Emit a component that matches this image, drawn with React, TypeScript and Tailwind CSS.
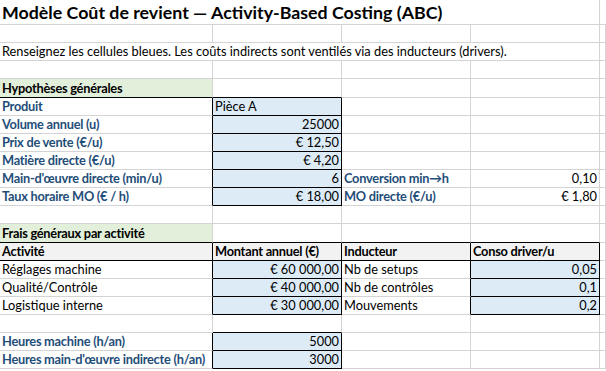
import React from 'react';

type Cell = {
  text?: string;
  span?: number;
  right?: boolean;
  bold?: boolean;
  label?: boolean;
  bg?: string;
  bR?: boolean;
  bB?: boolean;
};

const spanCls: Record<number, string> = { 1: 'col-span-1', 4: 'col-span-4' };

const XCell = ({ c }: { c: Cell }) => (
  <div
    className={[
      'flex items-end overflow-visible whitespace-nowrap px-[2px] pb-[1px] leading-[15px] border-r border-b',
      c.bR ? 'border-r-black' : 'border-r-[#d4d4d4]',
      c.bB ? 'border-b-black' : 'border-b-[#d4d4d4]',
      c.right ? 'justify-end' : 'justify-start',
      c.bold || c.label ? 'font-bold tracking-[-0.25px]' : 'font-normal',
      c.label ? 'text-[#1f4e79]' : 'text-black',
      c.bg ?? 'bg-white',
      spanCls[c.span ?? 1],
    ].join(' ')}
  >
    {c.text}
  </div>
);

const Row = ({ cells, h = 'h-[18px]' }: { cells: Cell[]; h?: string }) => (
  <div className={`grid grid-cols-[213px_129px_129px_129px_1fr] ${h}`}>
    {cells.map((c, i) => (
      <XCell key={i} c={c} />
    ))}
  </div>
);

const blue = 'bg-[#ddebf7]';
const green = 'bg-[#e2efda]';
const gray = 'bg-[#f2f2f2]';

const empty = (): Cell[] => [{}, {}, {}, {}, {}];

// hypothèses : libellé, valeur, libellé calculé, résultat
const hypo: [string, string, boolean, string?, string?][] = [
  ['Produit', 'Pièce A', false],
  ['Volume annuel (u)', '25000', true],
  ['Prix de vente (€/u)', '€ 12,50', true],
  ['Matière directe (€/u)', '€ 4,20', true],
  ["Main-d'œuvre directe (min/u)", '6', true, 'Conversion min→h', '0,10'],
  ['Taux horaire MO (€ / h)', '€ 18,00', true, 'MO directe (€/u)', '€ 1,80'],
];

const activites = [
  ['Réglages machine', '€ 60 000,00', 'Nb de setups', '0,05'],
  ['Qualité/Contrôle', '€ 40 000,00', 'Nb de contrôles', '0,1'],
  ['Logistique interne', '€ 30 000,00', 'Mouvements', '0,2'],
];

const heures = [
  ['Heures machine (h/an)', '5000'],
  ["Heures main-d'œuvre indirecte (h/an)", '3000'],
];

export default function App() {
  return (
    <div className="w-[606px] h-[371px] overflow-hidden bg-white text-[12.8px] font-['Lato',sans-serif]">
      <div className="grid grid-cols-[213px_129px_129px_129px_1fr] h-[25px]">
        <div className="col-span-4 flex items-end whitespace-nowrap px-[2px] pb-[1px] text-[17.8px] leading-[22px] font-bold text-black border-r border-b border-r-[#d4d4d4] border-b-[#d4d4d4]">
          Modèle Coût de revient — Activity-Based Costing (ABC)
        </div>
        <div className="border-b border-b-[#d4d4d4]" />
      </div>
      <Row cells={empty()} />
      <Row
        cells={[
          { text: 'Renseignez les cellules bleues. Les coûts indirects sont ventilés via des inducteurs (drivers).', span: 4 },
          {},
        ]}
      />
      <Row cells={empty()} />
      <Row
        h="h-[19px]"
        cells={[{ text: 'Hypothèses générales', bold: true, bg: green, bB: true }, { bB: true }, {}, {}, {}]}
      />
      {hypo.map(([lab, val, right, lab2, val2]) => (
        <Row
          key={lab}
          cells={[
            { text: lab, label: true, bR: true },
            { text: val, right, bg: blue, bR: true, bB: true },
            { text: lab2, label: true },
            { text: val2, right: true },
            {},
          ]}
        />
      ))}
      <Row cells={empty()} />
      <Row
        h="h-[19px]"
        cells={[
          { text: 'Frais généraux par activité', bold: true, bg: green, bB: true },
          { bB: true },
          { bB: true },
          { bB: true },
          {},
        ]}
      />
      <Row
        cells={[
          { text: 'Activité', bold: true, bg: gray, bR: true, bB: true },
          { text: 'Montant annuel (€)', bold: true, bg: gray, bR: true, bB: true },
          { text: 'Inducteur', bold: true, bg: gray, bR: true, bB: true },
          { text: 'Conso driver/u', bold: true, bg: gray, bR: true, bB: true },
          {},
        ]}
      />
      {activites.map(([act, mt, ind, conso]) => (
        <Row
          key={act}
          cells={[
            { text: act, bR: true },
            { text: mt, right: true, bg: blue, bR: true, bB: true },
            { text: ind, bR: true },
            { text: conso, right: true, bg: blue, bR: true, bB: true },
            {},
          ]}
        />
      ))}
      <Row cells={[{}, { bB: true }, {}, {}, {}]} />
      {heures.map(([lab, val]) => (
        <Row
          key={lab}
          cells={[
            { text: lab, label: true, bR: true },
            { text: val, right: true, bg: blue, bR: true, bB: true },
            {},
            {},
            {},
          ]}
        />
      ))}
    </div>
  );
}
